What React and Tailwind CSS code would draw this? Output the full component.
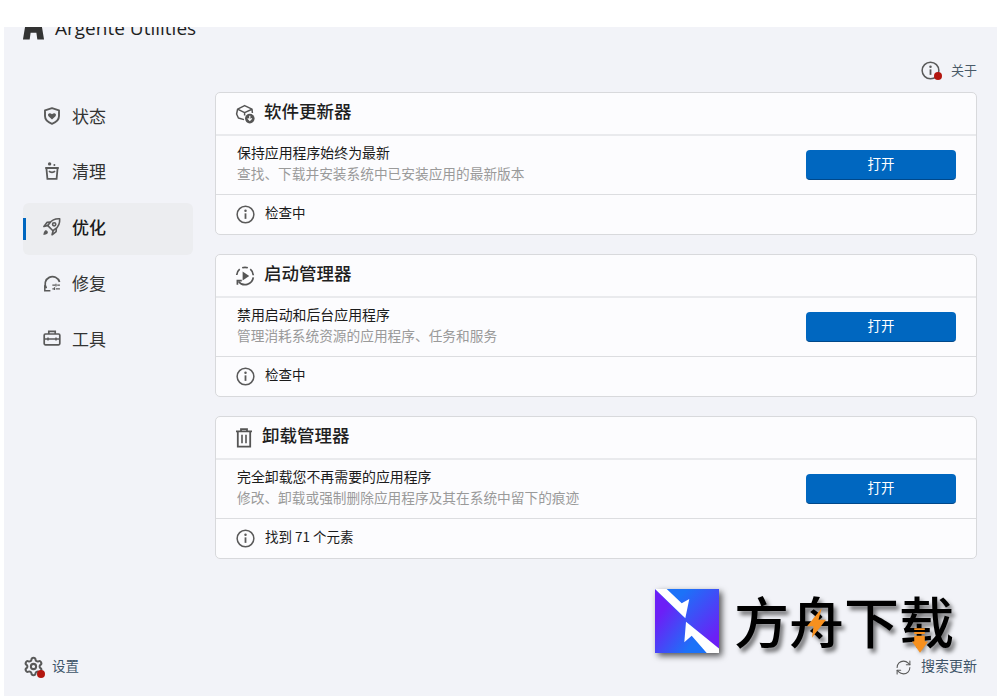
import React from "react";
import { RefreshCw, Settings } from "lucide-react";

const NAV_ITEMS = [
  { label: "状态", icon: ShieldHeart },
  { label: "清理", icon: Bucket },
  { label: "优化", icon: NavRocket, active: true },
  { label: "修复", icon: Repair },
  { label: "工具", icon: Toolbox },
];

const CARDS = [
  {
    title: "软件更新器",
    icon: BoxDownload,
    heading: "保持应用程序始终为最新",
    desc: "查找、下载并安装系统中已安装应用的最新版本",
    status: "检查中",
    mb: "mb-[19px]",
  },
  {
    title: "启动管理器",
    icon: StartupIcon,
    heading: "禁用启动和后台应用程序",
    desc: "管理消耗系统资源的应用程序、任务和服务",
    status: "检查中",
    mb: "mb-[19px]",
  },
  {
    title: "卸载管理器",
    icon: TrashIcon,
    heading: "完全卸载您不再需要的应用程序",
    desc: "修改、卸载或强制删除应用程序及其在系统中留下的痕迹",
    status: "找到 71 个元素",
    mb: "",
  },
];

function ShieldHeart() {
  return (
    <svg viewBox="0 0 18 18" className="w-[18px] h-[18px]" fill="none">
      <path d="M9 1.2 16 3.3V9c0 3.8-3 6.3-7 7.8C5 15.3 2 12.8 2 9V3.3Z" stroke="#5a5a5a" strokeWidth="1.9" strokeLinejoin="round" />
      <path d="M9 12.6 5.5 9.2c-1.7-2 1.1-4.1 3.5-1.9 2.4-2.2 5.2-.1 3.5 1.9Z" fill="#5a5a5a" />
    </svg>
  );
}

function Bucket() {
  return (
    <svg viewBox="0 0 18 18" className="w-[18px] h-[20px]" fill="none" stroke="#5a5a5a" strokeWidth="1.8">
      <circle cx="6.6" cy="1.9" r="1.7" fill="#5a5a5a" stroke="none" />
      <circle cx="11.4" cy="3" r="1" fill="#5a5a5a" stroke="none" />
      <path d="M2.2 6h13.6M3.4 6l1 10.8h9.2l1-10.8" />
      <path d="M6 9.2c1.6 1.6 4.4 1.6 6 0" />
    </svg>
  );
}

function NavRocket() {
  return (
    <svg viewBox="0 0 20 20" className="w-[20px] h-[20px] -ml-[1px]" fill="none" stroke="#5a5a5a" strokeWidth="1.7" strokeLinejoin="round">
      <path d="M18.6 1.4c.3 4.6-1 8.1-4.6 10.7l-2.5 1.8-5.4-5.4L7.9 6C10.5 2.5 14 1.1 18.6 1.4Z" />
      <circle cx="12.8" cy="7.2" r="1.7" />
      <path d="M6.3 8.3 2 9.4l3.4-4.3 3.7-.2" />
      <path d="M11.7 13.9 10.6 18.2l4.3-3.4.2-3.7" />
      <path d="M3.2 13.8c-1.2 1-1.6 3.2-1.7 4.5 1.3-.1 3.5-.5 4.5-1.7 1-1.6-1.3-3.8-2.8-2.8Z" fill="#5a5a5a" stroke="none" />
    </svg>
  );
}

function Repair() {
  return (
    <svg viewBox="0 0 20 20" className="w-[20px] h-[20px]" fill="none" stroke="#5a5a5a" strokeWidth="1.9">
      <path d="M18.4 8.8A8.2 8.2 0 1 0 3.8 15.8" />
      <path d="M2 12.4v6.2h6.2" strokeWidth="1.7" />
      <path d="M10.4 12.4h3M15.8 12.4h3M10.4 16.4h1.8M14.4 16.4h4.4M14.4 10.8v3M12.8 14.8v3" strokeWidth="1.4" />
    </svg>
  );
}

function Toolbox() {
  return (
    <svg viewBox="0 0 18 18" className="w-[18px] h-[18px]" fill="none" stroke="#5a5a5a" strokeWidth="1.7">
      <rect x="1.2" y="5" width="15.6" height="10.8" rx="1.2" />
      <path d="M5.8 5V2.4h6.4V5M1.2 10h15.6" />
      <path d="M5 8.6v3M13 8.6v3" strokeWidth="1.5" />
    </svg>
  );
}

function BoxDownload() {
  return (
    <svg viewBox="0 0 20 20" className="w-[20px] h-[20px]" fill="none" stroke="#555" strokeWidth="1.5">
      <path d="M9 15.6 3.4 14 1.6 10l1-4.8L9.6 1.6l7.4 3.6.4 3.8M2.6 5.2l7 3.4 7.4-3.4M9.6 8.6v3" strokeLinejoin="round" />
      <circle cx="14.8" cy="14.6" r="4.8" fill="#555" stroke="none" />
      <path d="M14.8 11.8v4.4M12.8 14.4l2 2 2-2" stroke="#fff" strokeWidth="1.2" />
    </svg>
  );
}

function StartupIcon() {
  return (
    <svg viewBox="0 0 20 20" className="w-[20px] h-[20px]" fill="none" stroke="#555" strokeWidth="1.7">
      <path d="M7.2 1.8a8.3 8.3 0 0 1 5.6 0M15.3 3.2a8.3 8.3 0 0 1 3 6M1.7 9a8.3 8.3 0 0 1 3-5.8" />
      <path d="M18.3 11.4a8.3 8.3 0 0 1-14.8 4" />
      <path d="M2.4 18.8v-4.2h4.4" />
      <path d="M7.6 5.6 14.2 10l-6.6 4.4Z" fill="#555" stroke="none" />
    </svg>
  );
}

function TrashIcon() {
  return (
    <svg viewBox="0 0 18 20" className="w-[18px] h-[20px]" fill="none" stroke="#555" strokeWidth="1.8">
      <path d="M1 3.4h16M6 3.4V1.2h6v2.2M2.8 3.4v15.2h12.4V3.4" />
      <path d="M7 6.8v8.4M11 6.8v8.4" strokeWidth="1.6" />
    </svg>
  );
}

function InfoIcon() {
  return (
    <svg viewBox="0 0 20 20" className="w-[19px] h-[19px]" fill="none">
      <circle cx="10" cy="10" r="8.8" stroke="#5a5a5a" strokeWidth="1.6" />
      <circle cx="10" cy="6" r="1.3" fill="#5a5a5a" />
      <path d="M10 8.8v5.8" stroke="#5a5a5a" strokeWidth="1.9" />
    </svg>
  );
}

function Logo() {
  return (
    <svg viewBox="0 0 64 64" className="w-16 h-16 drop-shadow-[3px_3px_3px_rgba(0,0,0,0.65)]">
      <defs>
        <linearGradient id="lowerFill" x1="0" y1="0.5" x2="0.55" y2="0.9">
          <stop offset="0" stopColor="#6c1ff6" />
          <stop offset="1" stopColor="#1c72f8" />
        </linearGradient>
        <linearGradient id="upperFill" x1="0.4" y1="0.1" x2="1" y2="0.7">
          <stop offset="0" stopColor="#1c72f8" />
          <stop offset="1" stopColor="#6c1ff6" />
        </linearGradient>
      </defs>
      <rect width="64" height="64" fill="url(#lowerFill)" />
      <path d="M0 0H64V64Z" fill="url(#upperFill)" />
      <path d="M0 0H11.7L26.7 14.3 34.3 10 30.3 29.3Z" fill="#fff" />
      <path d="M31 32.7 64 59.5V64H51.7L36.7 46.7 29.3 53.3Z" fill="#fff" />
    </svg>
  );
}

function Watermark() {
  return (
    <div className="absolute left-[655px] top-[589px] flex items-start pointer-events-none">
      <div className="mr-[15px] shrink-0">
        <Logo />
      </div>
      <div className="relative -mt-[3px] whitespace-nowrap text-[55px] leading-[66px] font-medium text-black [text-shadow:3px_4px_4px_rgba(0,0,0,0.55)]">
        方舟下载
        <svg viewBox="0 0 58 90" className="absolute left-[73px] top-[22px] w-[19px] h-[30px]">
          <path d="M45 0 0 55h20L15 90 58 35H35Z" fill="#f7901e" />
        </svg>
        <svg viewBox="0 0 50 77" className="absolute left-[178px] top-[42px] w-[16px] h-[25px]">
          <path d="M7 0h33v6H7ZM7 12h33v6H7ZM7 24h33v18h10L25 77 0 42h7Z" fill="#f7901e" />
        </svg>
      </div>
    </div>
  );
}

function Card({ card }) {
  const Icon = card.icon;
  return (
    <section className={`rounded-[5px] border border-[#d8d9dc] bg-[#fcfcfe] ${card.mb}`}>
      <div className="flex h-[43px] items-center gap-[9px] pl-[19px] border-b-2 border-[#e9eaed]">
        <Icon />
        <h2 className="pb-[4px] text-[17.5px] font-medium text-[#1f1f1f]">{card.title}</h2>
      </div>
      <div className="flex h-[59px] items-center justify-between pl-[21px] pr-[20px] border-b border-[#dcdde0]">
        <div className="pb-[5px]">
          <div className="text-[13.9px] leading-[21px] text-[#1b1b1b]">{card.heading}</div>
          <div className="text-[13.7px] leading-[21px] text-[#9a9a9a]">{card.desc}</div>
        </div>
        <button className="mb-[1px] h-[30px] w-[150px] rounded-[4px] bg-[#0067c0] border-b border-[#00488a] pb-[2px] text-[13.5px] text-white">打开</button>
      </div>
      <div className="flex h-[39px] items-center gap-[10px] pl-[20px] text-[13.5px] text-[#1b1b1b]">
        <InfoIcon />
        <span className="pb-[5px]">{card.status}</span>
      </div>
    </section>
  );
}

export default function App() {
  return (
    <div
      className="relative h-[700px] w-[1000px] overflow-hidden bg-white pt-[27px] pl-[4px] pr-[3px] pb-[4px]"
      style={{ fontFamily: '"Noto Sans CJK SC", "Noto Sans", sans-serif' }}
    >
      <div className="flex h-full overflow-hidden bg-[#f2f3f8]">
        <aside className="flex w-[211px] shrink-0 flex-col pl-[18px]">
          <div className="-mt-[15px] flex h-[32px] items-center gap-[10px]">
            <svg viewBox="0 0 24 24" className="w-[23px] h-[24px] shrink-0">
              <path d="M5 0h14l4 24h-7l-1-7H9l-1 7H1Z" fill="#333" />
            </svg>
            <span className="whitespace-nowrap text-[19px] text-[#1f1f1f]" style={{ fontFamily: '"Open Sans", sans-serif' }}>Argente Utilities</span>
          </div>
          <nav className="ml-[1px] mt-[48px] flex w-[170px] flex-col gap-[3.7px]">
            {NAV_ITEMS.map(({ label, icon: Icon, active }) => (
              <div
                key={label}
                className={`relative flex h-[52px] items-center gap-[11px] pl-[20px] pb-[5px] text-[17px] rounded-[6px] ${active ? "bg-[#ecedf0] font-medium text-[#1b1b1b]" : "text-[#333]"}`}
              >
                {active && <span className="absolute left-0 top-[15px] h-[22px] w-[3px] bg-[#0067c0]" />}
                <span className="flex w-[18px] justify-center"><Icon /></span>
                <span>{label}</span>
              </div>
            ))}
          </nav>
          <div className="mt-auto mb-[18px] ml-[1px] flex items-center gap-[8px] text-[13.5px] text-[#3e5468]">
            <span className="relative">
              <Settings size={21} strokeWidth={2.3} color="#5a5a5a" className="block" />
              <span className="absolute -bottom-[1px] -right-[1px] h-[8px] w-[8px] rounded-full bg-[#b3160f]" />
            </span>
            <span className="pb-[3px]">设置</span>
          </div>
        </aside>
        <main className="flex min-w-0 flex-1 flex-col pr-[20px]">
          <div className="flex h-[65px] items-start justify-end gap-[11px] pt-[34px] text-[13px] text-[#4a5a68]">
            <span className="relative">
              <InfoIcon />
              <span className="absolute bottom-0 -right-[2px] h-[8px] w-[8px] rounded-full bg-[#b3160f]" />
            </span>
            <span className="-mt-[1px]">关于</span>
          </div>
          {CARDS.map((card) => (
            <Card key={card.title} card={card} />
          ))}
          <div className="mt-auto mb-[17px] flex items-center justify-end gap-[9px] text-[14px] text-[#3e5468]">
            <RefreshCw size={17} strokeWidth={1.5} color="#5a5a5a" />
            <span className="pb-[3px]">搜索更新</span>
          </div>
        </main>
      </div>
      <Watermark />
    </div>
  );
}
